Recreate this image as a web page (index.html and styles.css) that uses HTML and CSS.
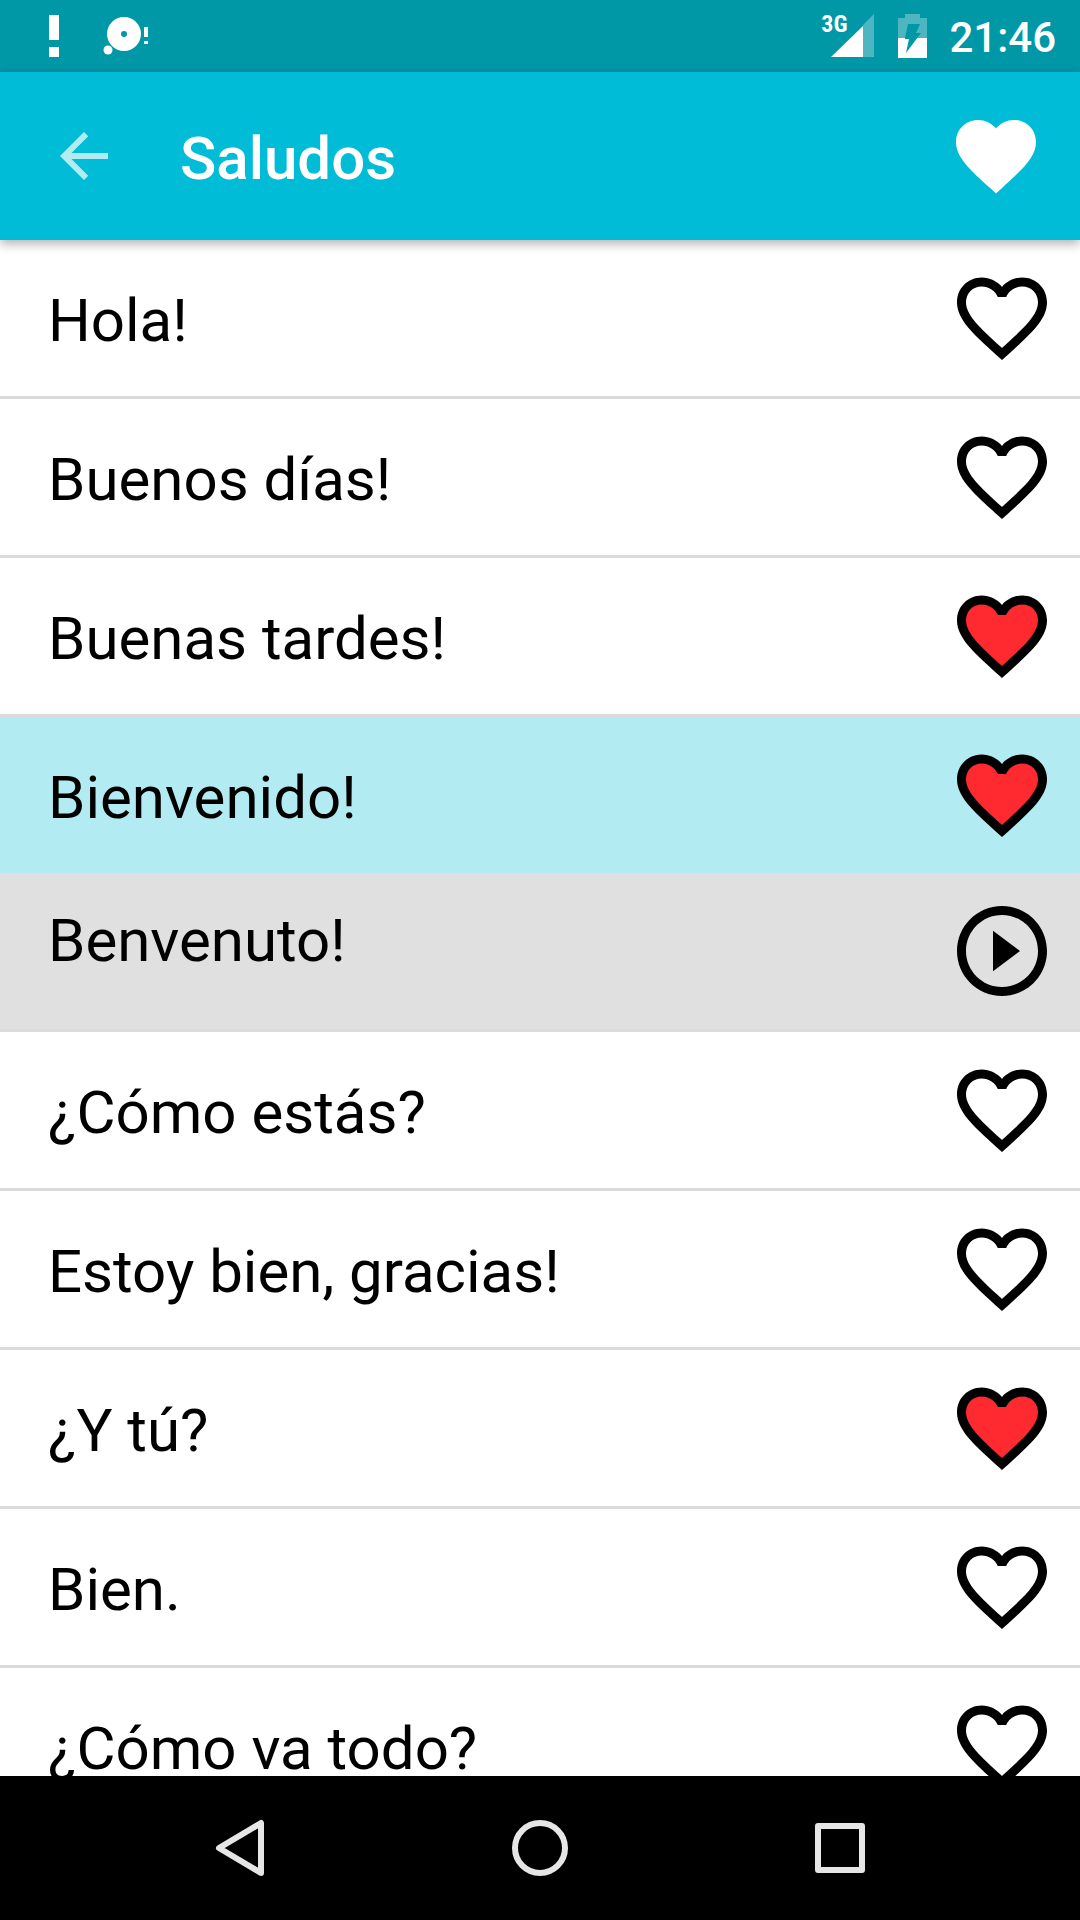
FILE: index.html
```html
<!DOCTYPE html>
<html lang="es">
<head>
    <meta charset="utf-8">
    <title>Saludos</title>
    <link rel="stylesheet" href="styles.css">
</head>
<body>
    <!-- icons -->
    <svg class="sprite" width="0" height="0">
        <symbol id="heart" viewBox="0 0 24 24">
            <path d="M12 21.35l-1.45-1.32C5.4 15.36 2 12.28 2 8.5 2 5.42 4.42 3 7.5 3c1.74 0 3.41.81 4.5 2.09C13.09 3.81 14.76 3 16.5 3 19.58 3 22 5.42 22 8.5c0 3.78-3.4 6.86-8.55 11.54L12 21.35z"/>
        </symbol>
        <symbol id="heart-border" viewBox="0 0 24 24">
            <path d="M16.5 3c-1.74 0-3.41.81-4.5 2.09C10.91 3.81 9.24 3 7.5 3 4.42 3 2 5.42 2 8.5c0 3.78 3.4 6.86 8.55 11.54L12 21.35l1.45-1.32C18.6 15.36 22 12.28 22 8.5 22 5.42 19.58 3 16.5 3zm-4.4 15.55l-.1.1-.1-.1C7.14 14.24 4 11.39 4 8.5 4 6.5 5.5 5 7.5 5c1.54 0 3.04.99 3.57 2.36h1.87C13.46 5.99 14.96 5 16.5 5c2 0 3.5 1.5 3.5 3.5 0 2.89-3.14 5.74-7.9 10.05z"/>
        </symbol>
        <symbol id="heart-full" viewBox="0 0 24 24">
            <path class="heart-fill" d="M12 18.8C7.14 14.24 3.8 11.39 3.8 8.5c0-2 1.7-3.7 3.7-3.7 1.54 0 3.04 1.2 3.57 2.4h1.87c.52-1.2 2.02-2.4 3.56-2.4 2 0 3.7 1.7 3.7 3.7 0 2.89-3.34 5.74-8.2 10.3z"/>
            <use href="#heart-border"/>
        </symbol>
        <symbol id="play" viewBox="0 0 24 24">
            <path d="M10 16.5l6-4.5-6-4.5v9zM12 2C6.48 2 2 6.48 2 12s4.48 10 10 10 10-4.48 10-10S17.52 2 12 2zm0 18c-4.41 0-8-3.59-8-8s3.59-8 8-8 8 3.59 8 8-3.59 8-8 8z"/>
        </symbol>
    </svg>

    <div class="status-bar">
        <svg class="notifications" width="102" height="72" viewBox="0 0 102 72">
            <path d="M1 15h10v25H1zM1 47h10v10H1z"/>
            <path fill-rule="evenodd" d="M76 17a17 17 0 1 0 0 34 17 17 0 1 0 0-34zm0 14a3 3 0 1 1 0 6 3 3 0 1 1 0-6z"/>
            <circle cx="60" cy="50" r="4.500"/>
            <path d="M96 27h4v10h-4zM96 41h4v3h-4z"/>
        </svg>
        <div class="status-right">
            <span class="network">3G</span>
            <svg class="signal" width="43" height="72" viewBox="0 0 43 72">
                <path class="dim" d="M43 14v43H32V25z"/>
                <path d="M0 57l32-31v31z"/>
            </svg>
            <svg class="battery" width="29" height="72" viewBox="0 0 29 72">
                <path class="dim" d="M7 14h15v4h7v20h-9.750L23 33h-5l4-9H10L7 38H0V18h7z"/>
                <path d="M0 38h7v1h4L8 53l11.250-15H29v20H0z"/>
            </svg>
            <span class="clock">21:46</span>
        </div>
    </div>

    <header class="toolbar">
        <button type="button" class="back" aria-label="Volver">
            <svg width="72" height="72" viewBox="0 0 24 24"><path d="M20 11H7.830l5.590-5.590L12 4l-8 8 8 8 1.410-1.410L7.830 13H20v-2z"/></svg>
        </button>
        <h1>Saludos</h1>
        <button type="button" class="favorites" aria-label="Favoritos">
            <svg width="96" height="96"><use href="#heart"/></svg>
        </button>
    </header>

    <ul class="phrases">
        <li>
            <span>Hola!</span>
            <button type="button" aria-label="Favorito" aria-pressed="false"><svg><use href="#heart-border"/></svg></button>
        </li>
        <li>
            <span>Buenos días!</span>
            <button type="button" aria-label="Favorito" aria-pressed="false"><svg><use href="#heart-border"/></svg></button>
        </li>
        <li>
            <span>Buenas tardes!</span>
            <button type="button" aria-label="Favorito" aria-pressed="true"><svg><use href="#heart-full"/></svg></button>
        </li>
        <li class="selected">
            <span>Bienvenido!</span>
            <button type="button" aria-label="Favorito" aria-pressed="true"><svg><use href="#heart-full"/></svg></button>
        </li>
        <li class="translation">
            <span>Benvenuto!</span>
            <button type="button" aria-label="Escuchar"><svg><use href="#play"/></svg></button>
        </li>
        <li>
            <span>¿Cómo estás?</span>
            <button type="button" aria-label="Favorito" aria-pressed="false"><svg><use href="#heart-border"/></svg></button>
        </li>
        <li>
            <span>Estoy bien, gracias!</span>
            <button type="button" aria-label="Favorito" aria-pressed="false"><svg><use href="#heart-border"/></svg></button>
        </li>
        <li>
            <span>¿Y tú?</span>
            <button type="button" aria-label="Favorito" aria-pressed="true"><svg><use href="#heart-full"/></svg></button>
        </li>
        <li>
            <span>Bien.</span>
            <button type="button" aria-label="Favorito" aria-pressed="false"><svg><use href="#heart-border"/></svg></button>
        </li>
        <li>
            <span>¿Cómo va todo?</span>
            <button type="button" aria-label="Favorito" aria-pressed="false"><svg><use href="#heart-border"/></svg></button>
        </li>
    </ul>

    <nav class="nav-bar">
        <button type="button" aria-label="Atrás">
            <svg width="72" height="72" viewBox="0 0 72 72"><path d="M57 11v50L15 36z"/></svg>
        </button>
        <button type="button" aria-label="Inicio">
            <svg width="72" height="72" viewBox="0 0 72 72"><circle cx="36" cy="36" r="25"/></svg>
        </button>
        <button type="button" aria-label="Recientes">
            <svg width="72" height="72" viewBox="0 0 72 72"><rect x="14" y="14" width="44" height="44"/></svg>
        </button>
    </nav>
</body>
</html>
```
FILE: styles.css
```css
* {
    box-sizing: border-box;
}

body {
    margin: 0;
    height: 100vh;
    display: flex;
    flex-direction: column;
    overflow: hidden;
    background-color: #fff;
    color: #000;
    font-family: Roboto, "Liberation Sans", sans-serif;
}

button {
    padding: 0;
    border: none;
    background: none;
    cursor: pointer;
}

svg {
    display: block;
}

.sprite {
    position: absolute;
}

.heart-fill {
    fill: #ff2a2f;
}

/* status bar */
.status-bar {
    flex: none;
    display: flex;
    justify-content: space-between;
    height: 72px;
    padding: 0 24px 0 48px;
    background-color: #0097a7;
    color: #fff;
    fill: #fff;
}

.status-right {
    display: flex;
    align-items: center;
}

.dim {
    fill-opacity: 0.3;
}

.network {
    align-self: flex-start;
    margin-top: 12px;
    margin-right: -16px;
    font-family: "Roboto Condensed", Roboto, sans-serif;
    font-size: 24px;
    line-height: 24px;
    font-weight: 700;
}

.battery {
    margin: 0 22px 0 24px;
}

.clock {
    padding-top: 2px;
    font-size: 42px;
    font-weight: 500;
}

/* toolbar */
.toolbar {
    flex: none;
    display: flex;
    align-items: center;
    height: 168px;
    padding: 0 36px 0 48px;
    background-color: #00bcd7;
    box-shadow: 0 4px 10px rgba(0, 0, 0, 0.3);
    z-index: 1;
}

.toolbar h1 {
    flex: 1;
    margin: 0;
    padding: 4px 0 0 60px;
    color: #fff;
    font-size: 60px;
    font-weight: 500;
}

.back {
    fill: #b2ebf2;
}

.favorites {
    fill: #fff;
}

/* phrases */
.phrases {
    flex: 1;
    min-height: 0;
    margin: 0;
    padding: 0;
    overflow: hidden;
    list-style: none;
}

.phrases li {
    display: flex;
    align-items: center;
    justify-content: space-between;
    height: 159px;
    padding: 0 24px 0 48px;
    border-bottom: 3px solid #dbdbdb;
}

.phrases span {
    padding-top: 6px;
    font-size: 60px;
    line-height: 72px;
}

.phrases svg {
    width: 108px;
    height: 108px;
}

.phrases .selected {
    height: 156px;
    border-bottom: none;
    background-color: #b2ebf2;
}

.phrases .translation {
    background-color: #e0e0e0;
}

.translation span {
    align-self: flex-start;
    padding-top: 32px;
}

/* navigation bar */
.nav-bar {
    flex: none;
    display: flex;
    height: 144px;
    padding: 0 90px;
    background-color: #000;
}

.nav-bar button {
    flex: 1;
    display: flex;
    align-items: center;
    justify-content: center;
}

.nav-bar svg {
    fill: none;
    stroke: #e6e6e6;
    stroke-width: 6;
    stroke-linejoin: round;
}
```
